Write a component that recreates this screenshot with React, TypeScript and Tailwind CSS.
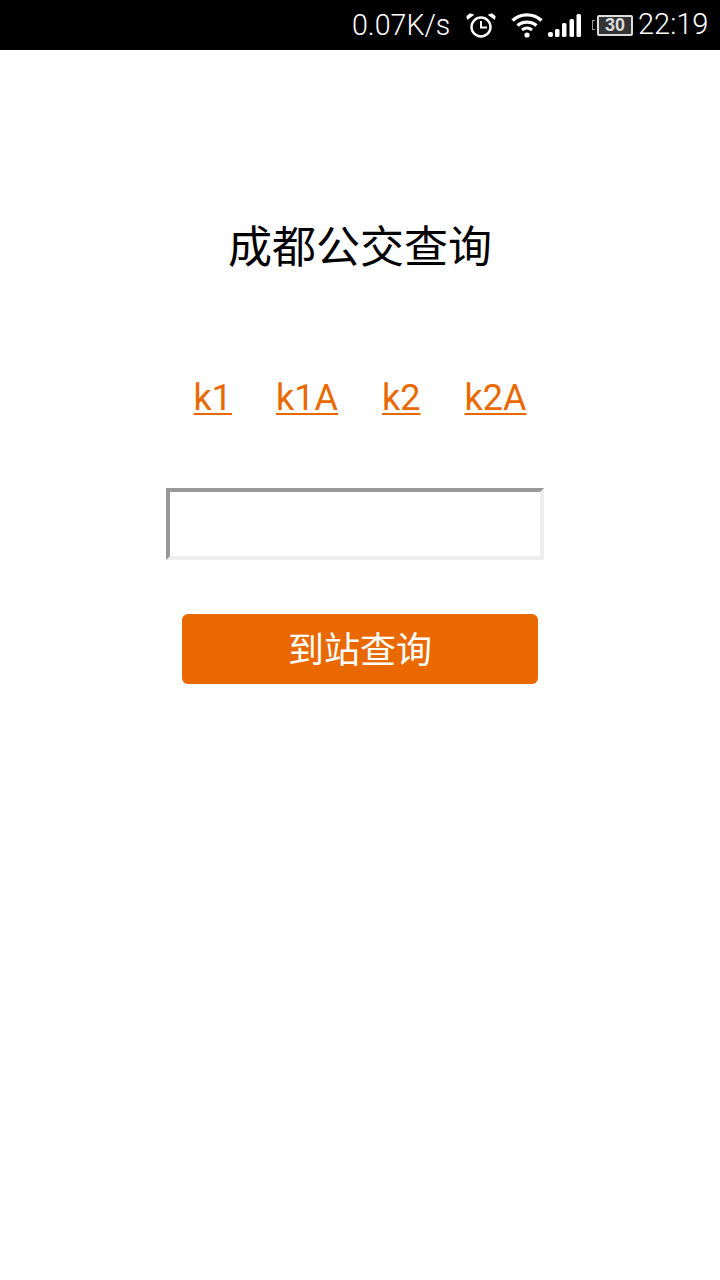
const lines = ["k1", "k1A", "k2", "k2A"]

function AlarmIcon() {
  return (
    <svg width="32" height="28" viewBox="0 -1 32 28" fill="none" className="text-white">
      <circle cx="16" cy="15" r="9.5" stroke="currentColor" strokeWidth="2.4" />
      <path d="M16 9v6.5h6" stroke="currentColor" strokeWidth="2" />
      <path d="M2.5 7 8 3 5 2 2 4.5z M29.5 7 24 3 27 2 30 4.5z" fill="currentColor" stroke="currentColor" strokeWidth="1.2" />
    </svg>
  )
}

function WifiIcon() {
  return (
    <svg width="32" height="26" viewBox="0 0 32 26" fill="none">
      <path d="M1.5 8.5C9.5 1 22.5 1 30.5 8.5" stroke="white" strokeWidth="3.4" />
      <path d="M6.5 13.5C11.5 9 20.5 9 25.5 13.5" stroke="white" strokeWidth="3.4" />
      <path d="M11 18C14 15.6 18 15.6 21 18" stroke="white" strokeWidth="3" />
      <circle cx="16" cy="23" r="2.6" fill="white" />
    </svg>
  )
}

function SignalIcon() {
  return (
    <svg width="34" height="26" viewBox="0 0 34 26" fill="white">
      <rect x="0" y="20" width="5" height="5" rx="2" />
      <rect x="7" y="17" width="4.5" height="8" rx="1.5" />
      <rect x="14" y="11" width="4.5" height="14" rx="1.5" />
      <rect x="21.5" y="7" width="4.5" height="18" rx="1.5" />
      <rect x="28.5" y="2" width="4.5" height="23" rx="1.5" />
    </svg>
  )
}

function BatteryIcon() {
  return (
    <div className="flex items-center gap-[2px]">
      <div className="w-[3px] h-[10px] border border-r-0 border-[#999]" />
      <div className="w-[36px] h-[21px] border-2 border-[#ddd] rounded-[2px] bg-[#333] flex items-center justify-center text-[#ddd] text-[18px] leading-none font-bold font-['Liberation_Sans',sans-serif]">
        30
      </div>
    </div>
  )
}

export default function App() {
  return (
    <div className="w-[720px] h-[1280px] bg-white flex flex-col font-['Roboto','Noto_Sans_CJK_SC',sans-serif]">
      <div className="h-[50px] bg-black flex items-center text-white pl-[352px] shrink-0">
        <span className="w-[98px] text-[28.6px] font-light">0.07K/s</span>
        <span className="ml-[15px]"><AlarmIcon /></span>
        <span className="ml-[14px]"><WifiIcon /></span>
        <span className="ml-[5px]"><SignalIcon /></span>
        <span className="ml-[10px]"><BatteryIcon /></span>
        <span className="ml-[5px] text-[29px] font-light">22:19</span>
      </div>

      <h1 className="mt-[165px] text-center text-[44px] leading-[58px] font-normal text-black font-['Noto_Sans_CJK_SC',sans-serif]">
        成都公交查询
      </h1>

      <div className="mt-[104px] flex justify-center gap-[44px] text-[36px] leading-[42px] text-[#e96900]">
        {lines.map((line) => (
          <a key={line} href="#" className="underline decoration-2 underline-offset-[3px]">
            {line}
          </a>
        ))}
      </div>

      <input
        type="text"
        className="mt-[69px] ml-[166px] w-[378px] h-[72px] shrink-0 bg-white border-4 border-t-[#999] border-l-[#999] border-r-[#eee] border-b-[#eee] outline-none"
      />

      <button className="mt-[54px] ml-[182px] w-[356px] h-[70px] shrink-0 rounded-[6px] bg-[#e96900] text-white text-[36px] pb-[5px] font-['Noto_Sans_CJK_SC',sans-serif]">
        到站查询
      </button>
    </div>
  )
}
